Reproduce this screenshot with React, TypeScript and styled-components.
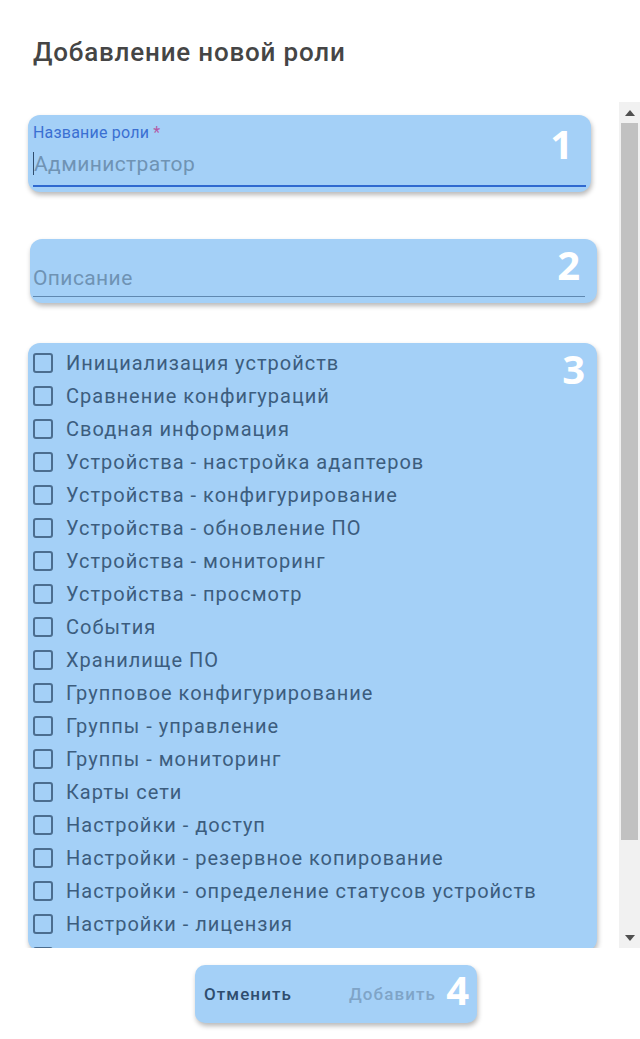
import React from 'react';
import styled, { createGlobalStyle } from 'styled-components';

const GlobalStyle = createGlobalStyle`
  html, body {
    margin: 0;
    padding: 0;
    background: #ffffff;
    font-family: Roboto, 'Liberation Sans', sans-serif;
  }
`;

const Dialog = styled.div`
  width: 640px;
  height: 1039px;
  display: flex;
  flex-direction: column;
  background: #ffffff;
  overflow: hidden;
`;

const Title = styled.h2`
  margin: 0;
  padding: 36px 0 0 33px;
  height: 66px;
  font-size: 26px;
  font-weight: 500;
  letter-spacing: 0.8px;
  color: #454545;
  line-height: 32px;
`;

const Body = styled.div`
  height: 846px;
  display: flex;
`;

const Scroller = styled.div`
  flex: 1;
  overflow: hidden;
  padding: 13px 0 0 28px;
`;

/* drawn scrollbar: the headless browser hides native ones */
const Rail = styled.div`
  width: 21px;
  flex: none;
  display: flex;
  flex-direction: column;
  background: #f1f1f1;
`;

const RailButton = styled.div`
  height: 21px;
  flex: none;
  display: flex;
  align-items: center;
  justify-content: center;
`;

const Thumb = styled.div`
  height: 717px;
  margin: 0 2px;
  background: #c1c1c1;
`;

const Track = styled.div`
  flex: 1;
`;

const Arrow = ({ down }: { down?: boolean }) => (
  <svg width="10" height="6" viewBox="0 0 10 6">
    <polygon points={down ? '0,0 10,0 5,6' : '0,6 5,0 10,6'} fill="#505050" />
  </svg>
);

const Mark = styled.div`
  position: relative;
  background: #a4d0f7;
  border-radius: 12px;
  box-shadow: 1px 3px 5px rgba(0, 0, 0, 0.28);
`;

const Badge = styled.span<{ $right: number; $top: number }>`
  position: absolute;
  right: ${(p) => p.$right}px;
  top: ${(p) => p.$top}px;
  font-family: 'Open Sans', sans-serif;
  font-weight: 700;
  font-size: 40px;
  line-height: 1;
  color: #ffffff;
`;

const NameField = styled(Mark)`
  width: 563px;
  height: 77px;
  box-sizing: border-box;
  padding: 8px 5px 5px;
  display: flex;
  flex-direction: column;
`;

const Label = styled.div`
  font-size: 16px;
  line-height: 19px;
  letter-spacing: 0.2px;
  color: #3a6fd2;

  span {
    color: #b45aa6;
  }
`;

const InputLine = styled.div<{ $active?: boolean }>`
  flex: 1;
  display: flex;
  align-items: center;
  font-size: 21px;
  letter-spacing: 0.4px;
  color: #6f93b4;
  border-bottom: ${(p) => (p.$active ? '2px solid #2f69d0' : '1px solid #5f88b0')};
`;

const Caret = styled.span`
  display: inline-block;
  width: 1px;
  height: 23px;
  background: #2f4d6e;
`;

const DescField = styled(Mark)`
  width: 567px;
  height: 64px;
  margin: 47px 0 0 2px;
  box-sizing: border-box;
  padding: 21px 12px 6px 3px;
  display: flex;
  flex-direction: column;
`;

const ListBox = styled(Mark)`
  width: 569px;
  height: 608px;
  margin-top: 40px;
`;

const List = styled.div`
  height: 100%;
  padding: 3px 0 0 5px;
  box-sizing: border-box;
  overflow: hidden;
  border-radius: 12px;
`;

const Item = styled.label`
  display: flex;
  align-items: center;
  gap: 13px;
  height: 33px;
  font-size: 20px;
  letter-spacing: 1px;
  color: #3c5d7e;
`;

const Box = styled.span`
  width: 20px;
  height: 20px;
  box-sizing: border-box;
  border: 2px solid #4b6d8f;
  border-radius: 3px;
  flex: none;
`;

const Footer = styled.div`
  flex: 1;
  display: flex;
  justify-content: center;
  padding-top: 17px;
  align-items: flex-start;
`;

const Actions = styled(Mark)`
  margin-left: 32px;
  height: 58px;
  padding: 0 41px 0 9px;
  display: flex;
  align-items: center;
  gap: 57px;
  border-radius: 10px;
`;

const Action = styled.button<{ $disabled?: boolean }>`
  border: none;
  background: none;
  padding: 0;
  font-family: Roboto, 'Liberation Sans', sans-serif;
  font-size: 17px;
  font-weight: 500;
  letter-spacing: 1.1px;
  color: ${(p) => (p.$disabled ? '#7fa4c7' : '#2f4d6e')};
  cursor: pointer;
`;

const rights = [
  'Инициализация устройств',
  'Сравнение конфигураций',
  'Сводная информация',
  'Устройства - настройка адаптеров',
  'Устройства - конфигурирование',
  'Устройства - обновление ПО',
  'Устройства - мониторинг',
  'Устройства - просмотр',
  'События',
  'Хранилище ПО',
  'Групповое конфигурирование',
  'Группы - управление',
  'Группы - мониторинг',
  'Карты сети',
  'Настройки - доступ',
  'Настройки - резервное копирование',
  'Настройки - определение статусов устройств',
  'Настройки - лицензия',
];

export default function App() {
  return (
    <>
      <GlobalStyle />
      <Dialog>
        <Title>Добавление новой роли</Title>
        <Body>
          <Scroller>
            <NameField>
              <Label>
                Название роли <span>*</span>
              </Label>
              <InputLine $active>
                <Caret />
                Администратор
              </InputLine>
              <Badge $right={18} $top={9}>1</Badge>
            </NameField>
            <DescField>
              <InputLine>Описание</InputLine>
              <Badge $right={17} $top={6}>2</Badge>
            </DescField>
            <ListBox>
              <List>
                {rights.map((r) => (
                  <Item key={r}>
                    <Box />
                    {r}
                  </Item>
                ))}
                <Item>
                  <Box />
                </Item>
              </List>
              <Badge $right={12} $top={6}>3</Badge>
            </ListBox>
          </Scroller>
          <Rail>
            <RailButton>
              <Arrow />
            </RailButton>
            <Thumb />
            <Track />
            <RailButton>
              <Arrow down />
            </RailButton>
          </Rail>
        </Body>
        <Footer>
          <Actions>
            <Action>Отменить</Action>
            <Action $disabled>Добавить</Action>
            <Badge $right={8} $top={5}>4</Badge>
          </Actions>
        </Footer>
      </Dialog>
    </>
  );
}
